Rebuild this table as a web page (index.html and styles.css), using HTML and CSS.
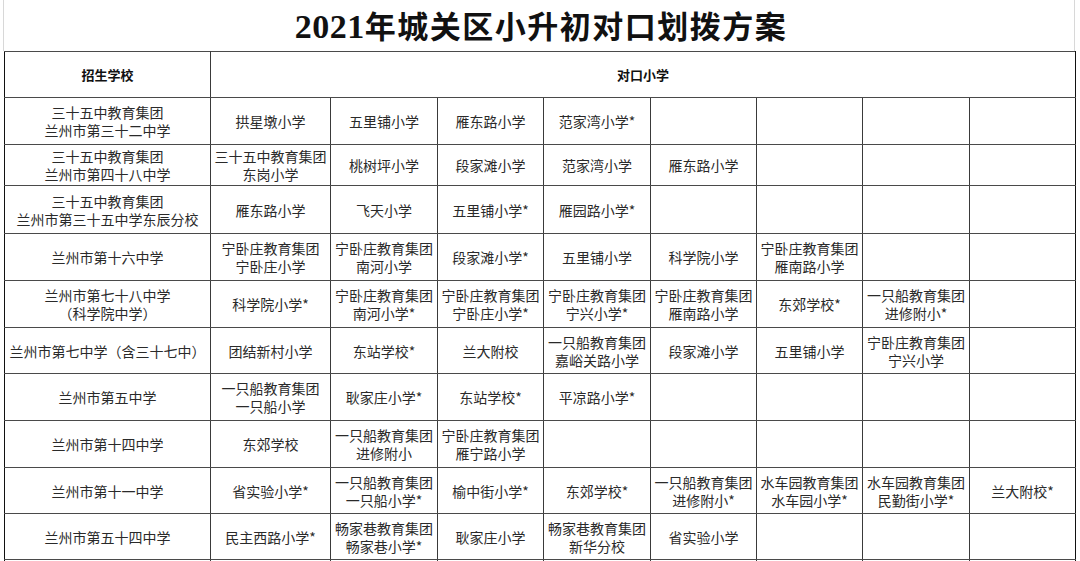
FILE: index.html
```html
<!DOCTYPE html>
<html lang="zh-CN">
<head>
<meta charset="utf-8">
<title>2021年城关区小升初对口划拨方案</title>
<link rel="stylesheet" href="styles.css">
</head>
<body>
<div class="page">
  <h1 class="title"><span class="num">2021</span>年城关区小升初对口划拨方案</h1>
  <table class="plan">
    <colgroup>
      <col class="c-school">
      <col class="c1"><col class="c2"><col class="c3"><col class="c4">
      <col class="c5"><col class="c6"><col class="c7"><col class="c8">
    </colgroup>
    <tr class="h46 head">
      <th>招生学校</th>
      <th colspan="8">对口小学</th>
    </tr>
    <tr class="h47">
      <td>三十五中教育集团<br>兰州市第三十二中学</td>
      <td>拱星墩小学</td><td>五里铺小学</td><td>雁东路小学</td><td>范家湾小学*</td>
      <td></td><td></td><td></td><td></td>
    </tr>
    <tr class="h41">
      <td>三十五中教育集团<br>兰州市第四十八中学</td>
      <td>三十五中教育集团<br>东岗小学</td><td>桃树坪小学</td><td>段家滩小学</td><td>范家湾小学</td>
      <td>雁东路小学</td><td></td><td></td><td></td>
    </tr>
    <tr class="h48">
      <td>三十五中教育集团<br>兰州市第三十五中学东辰分校</td>
      <td>雁东路小学</td><td>飞天小学</td><td>五里铺小学*</td><td>雁园路小学*</td>
      <td></td><td></td><td></td><td></td>
    </tr>
    <tr class="h47">
      <td>兰州市第十六中学</td>
      <td>宁卧庄教育集团<br>宁卧庄小学</td><td>宁卧庄教育集团<br>南河小学</td><td>段家滩小学*</td><td>五里铺小学</td>
      <td>科学院小学</td><td>宁卧庄教育集团<br>雁南路小学</td><td></td><td></td>
    </tr>
    <tr class="h47">
      <td>兰州市第七十八中学<br>（科学院中学）</td>
      <td>科学院小学*</td><td>宁卧庄教育集团<br>南河小学*</td><td>宁卧庄教育集团<br>宁卧庄小学*</td><td>宁卧庄教育集团<br>宁兴小学*</td>
      <td>宁卧庄教育集团<br>雁南路小学</td><td>东郊学校*</td><td>一只船教育集团<br>进修附小*</td><td></td>
    </tr>
    <tr class="h46">
      <td>兰州市第七中学（含三十七中）</td>
      <td>团结新村小学</td><td>东站学校*</td><td>兰大附校</td><td>一只船教育集团<br>嘉峪关路小学</td>
      <td>段家滩小学</td><td>五里铺小学</td><td>宁卧庄教育集团<br>宁兴小学</td><td></td>
    </tr>
    <tr class="h47">
      <td>兰州市第五中学</td>
      <td>一只船教育集团<br>一只船小学</td><td>耿家庄小学*</td><td>东站学校*</td><td>平凉路小学*</td>
      <td></td><td></td><td></td><td></td>
    </tr>
    <tr class="h47">
      <td>兰州市第十四中学</td>
      <td>东郊学校</td><td>一只船教育集团<br>进修附小</td><td>宁卧庄教育集团<br>雁宁路小学</td><td></td>
      <td></td><td></td><td></td><td></td>
    </tr>
    <tr class="h46">
      <td>兰州市第十一中学</td>
      <td>省实验小学*</td><td>一只船教育集团<br>一只船小学*</td><td>榆中街小学*</td><td>东郊学校*</td>
      <td>一只船教育集团<br>进修附小*</td><td>水车园教育集团<br>水车园小学*</td><td>水车园教育集团<br>民勤街小学*</td><td>兰大附校*</td>
    </tr>
    <tr class="h46">
      <td>兰州市第五十四中学</td>
      <td>民主西路小学*</td><td>畅家巷教育集团<br>畅家巷小学*</td><td>耿家庄小学</td><td>畅家巷教育集团<br>新华分校</td>
      <td>省实验小学</td><td></td><td></td><td></td>
    </tr>
    <tr class="h46">
      <td></td><td></td><td></td><td></td><td></td><td></td><td></td><td></td><td></td>
    </tr>
  </table>
</div>
</body>
</html>
```

FILE: styles.css
```css
html, body {
  margin: 0;
  padding: 0;
  background: #ffffff;
}

.page {
  width: 1080px;
  height: 561px;
  overflow: hidden;
  padding-left: 4px;
  box-sizing: border-box;
  font-family: "Noto Sans CJK SC", "Noto Sans", sans-serif;
}

.title {
  margin: 0;
  width: 1072px;
  height: 51px;
  box-sizing: border-box;
  border-left: 1px solid #d8d8d8;
  border-right: 1px solid #d8d8d8;
  margin-left: -1px;
  text-align: center;
  font-family: "Noto Sans CJK SC", sans-serif;
  font-weight: 700;
  font-size: 31px;
  line-height: 49px;
  color: #111111;
  letter-spacing: 1.5px;
  padding-left: 4px;
}

.title .num {
  font-family: "Liberation Serif", serif;
  font-size: 34px;
  font-weight: 700;
  letter-spacing: 0.5px;
}

.plan {
  border-collapse: collapse;
  table-layout: fixed;
  width: 1071px;
}

.c-school { width: 206px; }
.c1 { width: 120px; }
.c2 { width: 107px; }
.c3 { width: 106px; }
.c4 { width: 107px; }
.c5 { width: 106px; }
.c6 { width: 106px; }
.c7 { width: 107px; }
.c8 { width: 106px; }

.plan td,
.plan th {
  border-top: 1px solid #4a4a4a;
  border-bottom: 1px solid #4a4a4a;
  border-left: 1px solid #3a3a3a;
  border-right: 1px solid #3a3a3a;
  padding: 0;
  text-align: center;
  vertical-align: middle;
  font-size: 14px;
  line-height: 18px;
  color: #2a2a2a;
  white-space: nowrap;
  overflow: hidden;
}

.plan tr > :first-child {
  border-left: 1.5px solid #111111;
}

.plan tr > :last-child {
  border-right: 1.5px solid #111111;
}

.plan .head th {
  font-weight: 700;
  font-size: 13px;
  color: #111111;
}

.h41 { height: 41px; }
.h46 { height: 46px; }
.h47 { height: 47px; }
.h48 { height: 48px; }
```
